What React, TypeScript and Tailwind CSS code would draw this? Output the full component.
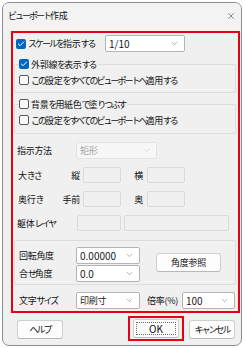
import { Check, ChevronDown, X } from 'lucide-react';

const isAscii = (s: string) => /^[\x20-\x7e]+$/.test(s);

// kana runs are set tighter so the text gets the narrow look of the UI font
function J({ t }: { t: string }) {
  const parts = t.split(/([\u3040-\u30ff]+)/).filter((p) => p !== '');
  return (
    <>
      {parts.map((p, i) =>
        /[\u3040-\u30ff]/.test(p) ? (
          <span key={i} className="tracking-[-2px]">
            {p}
          </span>
        ) : (
          <span key={i} className={isAscii(p) ? 'tracking-normal text-[10px]' : ''}>
            {p}
          </span>
        )
      )}
    </>
  );
}

function CheckBox({ checked, label }: { checked?: boolean; label: string }) {
  return (
    <div className="flex items-center h-[14px] bg-[#f0f0f0] pr-[2px]">
      {checked ? (
        <div className="w-[10px] h-[10px] rounded-[2px] bg-[#0067c0] flex items-center justify-center">
          <Check className="w-[8px] h-[8px] text-white" strokeWidth={3} />
        </div>
      ) : (
        <div className="w-[10px] h-[10px] rounded-[2px] border border-[#5a5a5a] bg-[#f7f7f7]" />
      )}
      <span className="ml-[2px]">
        <J t={label} />
      </span>
    </div>
  );
}

function Combo({ value, width, disabled }: { value: string; width: string; disabled?: boolean }) {
  return (
    <div
      className={`${width} h-[17px] flex items-center justify-between pl-[3px] pr-[5px] rounded-[2px] border ${
        disabled ? 'bg-[#f7f7f7] border-[#e3e3e3] text-[#a3a3a3]' : 'bg-white border-[#b4b4b4] text-[#1a1a1a]'
      }`}
    >
      <span>
        <J t={value} />
      </span>
      <ChevronDown className={`w-[9px] h-[9px] ${disabled ? 'text-[#c8c8c8]' : 'text-[#7a7a7a]'}`} strokeWidth={1.5} />
    </div>
  );
}

function TextBox({ width }: { width: string }) {
  return <div className={`${width} h-[16px] rounded-[2px] border border-[#dadada] bg-[#f0f0f0]`} />;
}

function Btn({ label, width, focus }: { label: string; width: string; focus?: boolean }) {
  return (
    <div
      className={`${width} h-[19px] rounded-[3px] border border-[#cfcfcf] border-b-[#b8b8b8] bg-[#fdfdfd] flex items-center justify-center p-[2px]`}
    >
      <div
        className={`w-full h-full flex items-center justify-center ${focus ? 'border border-dotted border-[#6a6a6a]' : ''}`}
      >
        <J t={label} />
      </div>
    </div>
  );
}

function Label({ t, className }: { t: string; className: string }) {
  return (
    <span className={className}>
      <J t={t} />
    </span>
  );
}

export default function App() {
  return (
    <div className='w-[245px] h-[348px] bg-white p-[2px] font-["Noto_Sans_CJK_JP",sans-serif] text-[9px] leading-none tracking-[-0.3px] text-[#111] whitespace-nowrap'>
      <div className="w-[240px] h-[344px] rounded-[7px] border border-[#8c8c8c] bg-[#f0f0f0] flex flex-col overflow-hidden">
        {/* Title bar */}
        <div className="h-[28px] flex items-center justify-between pl-[5px] pr-[5px] bg-[#f3f3f3]">
          <Label t="ビューポート作成" className="-mt-[3px]" />
          <X className="w-[10px] h-[10px] -mt-[3px] text-[#333]" strokeWidth={1.3} />
        </div>

        {/* Red frame */}
        <div className="ml-[8px] w-[229px] h-[282px] border-2 border-[#e60012] flex flex-col">
          <div className="mt-[2px] flex items-center h-[17px]">
            <div className="w-[92px] pl-[3px]">
              <CheckBox checked label="スケールを指示する" />
            </div>
            <Combo value="1/10" width="w-[80px]" />
          </div>

          {/* Group 1 */}
          <div className="mt-[12px] ml-[1px] w-[222px] h-[29px] border border-[#dcdcdc] rounded-[2px]">
            <div className="-mt-[8px] pl-[4px] w-fit">
              <CheckBox checked label="外郭線を表示する" />
            </div>
            <div className="mt-[2px] pl-[4px] w-fit">
              <CheckBox label="この設定をすべてのビューポートへ適用する" />
            </div>
          </div>

          {/* Group 2 */}
          <div className="mt-[11px] ml-[1px] w-[222px] h-[30px] border border-[#dcdcdc] rounded-[2px]">
            <div className="-mt-[8px] pl-[4px] w-fit">
              <CheckBox label="背景を用紙色で塗りつぶす" />
            </div>
            <div className="mt-[2px] pl-[4px] w-fit">
              <CheckBox label="この設定をすべてのビューポートへ適用する" />
            </div>
          </div>

          <div className="mt-[8px] flex items-center h-[16px] pl-[4px]">
            <Label t="指示方法" className="w-[59px]" />
            <Combo value="矩形" width="w-[81px]" disabled />
          </div>

          <div className="mt-[9px] flex items-center h-[16px] pl-[5px]">
            <Label t="大きさ" className="w-[44px]" />
            <Label t="縦" className="w-[18px] text-right" />
            <div className="ml-[3px]">
              <TextBox width="w-[38px]" />
            </div>
            <Label t="横" className="w-[22px] text-right" />
            <div className="ml-[4px]">
              <TextBox width="w-[38px]" />
            </div>
          </div>

          <div className="mt-[8px] flex items-center h-[16px] pl-[5px]">
            <Label t="奥行き" className="w-[44px]" />
            <Label t="手前" className="w-[18px] text-right" />
            <div className="ml-[3px]">
              <TextBox width="w-[38px]" />
            </div>
            <Label t="奥" className="w-[22px] text-right" />
            <div className="ml-[4px]">
              <TextBox width="w-[38px]" />
            </div>
          </div>

          <div className="mt-[8px] flex items-center h-[16px] pl-[4px]">
            <Label t="躯体レイヤ" className="w-[60px]" />
            <TextBox width="w-[44px]" />
            <div className="ml-[3px]">
              <TextBox width="w-[105px]" />
            </div>
          </div>

          {/* Group 3 */}
          <div className="mt-[9px] ml-[1px] w-[222px] h-[45px] border border-[#dcdcdc] rounded-[2px] flex items-start">
            <div className="flex flex-col pl-[4px] pt-[6px] gap-[1px]">
              <div className="flex items-center h-[17px]">
                <Label t="回転角度" className="w-[57px]" />
                <Combo value="0.00000" width="w-[64px]" />
              </div>
              <div className="flex items-center h-[17px]">
                <Label t="合せ角度" className="w-[57px]" />
                <Combo value="0.0" width="w-[64px]" />
              </div>
            </div>
            <div className="ml-[16px] mt-[12px]">
              <Btn label="角度参照" width="w-[65px]" />
            </div>
          </div>

          <div className="mt-[7px] flex items-center h-[17px] pl-[6px]">
            <Label t="文字サイズ" className="w-[57px]" />
            <Combo value="印刷寸" width="w-[64px]" />
            <Label t="倍率(%)" className="ml-[7px] w-[35px]" />
            <Combo value="100" width="w-[53px]" />
          </div>
        </div>

        {/* Footer buttons */}
        <div className="mt-[3px] flex items-center">
          <div className="ml-[14px] mt-[1px]">
            <Btn label="ヘルプ" width="w-[46px]" />
          </div>
          <div className="ml-[65px] border-2 border-[#e60012] px-[3px] py-[1px]">
            <Btn label="OK" width="w-[46px]" focus />
          </div>
          <div className="ml-[5px] mt-[1px]">
            <Btn label="キャンセル" width="w-[46px]" />
          </div>
        </div>
      </div>
    </div>
  );
}
